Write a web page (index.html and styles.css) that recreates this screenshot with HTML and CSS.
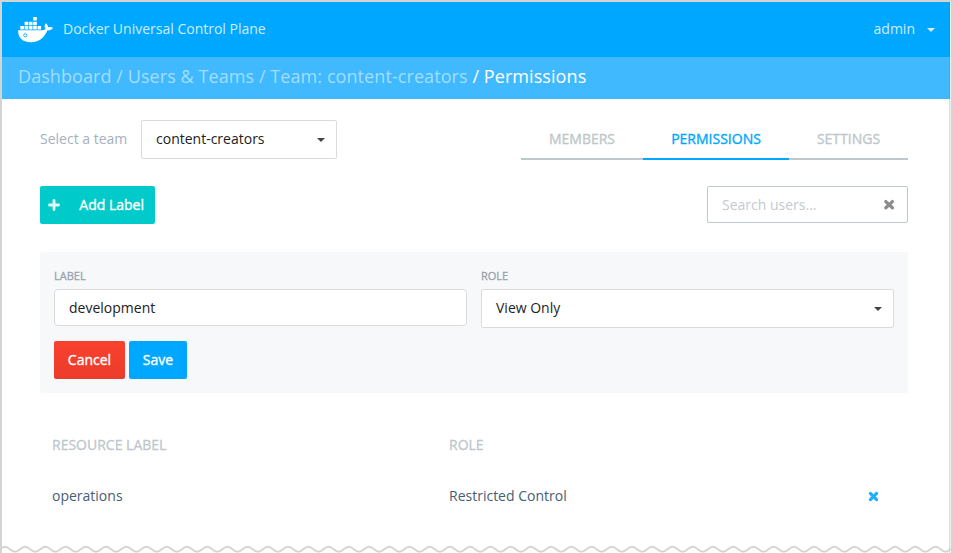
FILE: index.html
```html
<!DOCTYPE html>
<html lang="en">
<head>
<meta charset="utf-8">
<title>Docker Universal Control Plane</title>
<link rel="stylesheet" href="styles.css">
</head>
<body>
<div class="frame">
  <header class="topbar">
    <svg class="logo" width="36" height="26" viewBox="0 0 36 26">
      <g fill="#fff">
        <path d="M15.2 0h3.6v3.6h-3.6zM6.6 4.7h3.6v3.6h-3.6zM10.9 4.7h3.6v3.6h-3.6zM15.2 4.7h3.6v3.6h-3.6zM2.3 9h3.6v3.4h-3.6zM6.6 9h3.6v3.4h-3.6zM10.9 9h3.6v3.4h-3.6zM15.2 9h3.6v3.4h-3.6zM19.5 9h3.6v3.4h-3.6z"/>
        <path d="M.2 13.2H24.600q2-.2 3-1.200C26 10 26.500 7.700 27.900 6.300C29.500 7.600 30 9 30 10.200C31.800 9.900 33.900 10 35 10.800C34 12.800 32 13.600 29.300 13.500C26 21 21 25.200 12.500 25.200C4 25.200-.3 20 .2 13.200z"/>
      </g>
      <circle cx="7.300" cy="18.300" r="1.600" fill="#fff" stroke="#19afff" stroke-width="1"/>
    </svg>
    <span class="product">Docker Universal Control Plane</span>
    <span class="user">admin</span>
    <i class="caret caret-light"></i>
  </header>
  <nav class="crumbs"><span class="trail">Dashboard / Users &amp; Teams / Team: content-creators</span><span class="here">&nbsp;/ Permissions</span></nav>
  <main>
    <div class="row">
      <span class="team-label">Select a team</span>
      <div class="select team-select"><span>content-creators</span><i class="caret"></i></div>
      <div class="tabs">
        <div class="tab tab-members"><span>MEMBERS</span></div>
        <div class="tab tab-permissions"><span>PERMISSIONS</span></div>
        <div class="tab tab-settings"><span>SETTINGS</span></div>
      </div>
    </div>
    <div class="row tools">
      <div class="button add"><svg width="12" height="12" viewBox="0 0 12 12"><path d="M6 1.500v9M1.500 6h9" stroke="#e6fafa" stroke-width="2.800" stroke-linecap="round"/></svg><span>Add Label</span></div>
      <div class="search"><span>Search users...</span><svg width="12" height="12" viewBox="0 0 12 12"><path d="M2.800 2.600l6.600 6.200M9.400 2.600l-6.600 6.200" stroke="#8c8c8c" stroke-width="3.300" stroke-linecap="round"/></svg></div>
    </div>
    <section class="panel">
      <div class="fields">
        <div class="field"><div class="caption">LABEL</div><div class="input"><span>development</span></div></div>
        <div class="field"><div class="caption">ROLE</div><div class="select"><span class="view">View Only</span><i class="caret"></i></div></div>
      </div>
      <div class="actions">
        <div class="button cancel"><span>Cancel</span></div>
        <div class="button save"><span>Save</span></div>
      </div>
    </section>
    <div class="table">
      <div class="head"><span class="h-label">RESOURCE LABEL</span></div><div class="head"><span class="h-role">ROLE</span></div><div></div>
      <div><span class="c-label">operations</span></div><div><span class="c-role">Restricted Control</span></div>
      <div class="remove"><svg width="12" height="12" viewBox="0 0 12 12"><path d="M2.400 3.400l6.200 6.200M8.600 3.400l-6.200 6.200" stroke="#22afff" stroke-width="3.200" stroke-linecap="round"/></svg></div>
    </div>
  </main>
  <svg class="wave" width="949" height="8">
    <defs><pattern id="ripple" x="-7.200" y="0" width="20.230" height="8" patternUnits="userSpaceOnUse"><path d="M-10.115 1.700C-5.500 1.700-4.600 6.700 0 6.700S5.500 1.700 10.115 1.700S15.600 6.700 20.230 6.700S25.700 1.700 30.345 1.700" fill="none" stroke="#d4d4d4" stroke-width="1.900"/></pattern></defs>
    <rect width="949" height="8" fill="url(#ripple)"/>
  </svg>
</div>
</body>
</html>
```
FILE: styles.css
```css
* { box-sizing: border-box; }
body { margin: 0; background: #fff; font: 14px/20px "Open Sans", "Noto Sans", sans-serif; color: #222; }
.frame { width: 953px; height: 553px; overflow: hidden; display: flex; flex-direction: column; border: 2px solid #d4d4d4; border-bottom: 0; box-shadow: inset -1px 0 #f0f0f0, inset -2px 0 #dcdcdc; }
span { white-space: nowrap; }
.topbar { height: 55px; flex: none; margin-right: 1px; background: #00a7ff; border-right: 1px solid #0c9de9; display: flex; align-items: center; padding: 0 14px 0 16px; color: #ccedff; }
.logo { flex: none; }
.product { margin-left: 9px; padding-bottom: 2px; }
.user { margin-left: auto; padding-bottom: 2px; }
.caret { flex: none; width: 0; height: 0; border: 4px solid transparent; border-top-color: #444; border-bottom: 0; }
.caret-light { border-top-color: #ccedff; margin-left: 12px; }
.crumbs { height: 42px; flex: none; margin-right: 1px; padding: 0 16px; background: #40b9ff; border-right: 1px solid #2dadf2; font-size: 18px; line-height: 38px; letter-spacing: .075px; color: #fff; white-space: nowrap; }
.trail { color: #a3deff; }
main { flex: 1; padding: 21px 43px 0 38px; }
.row { display: flex; height: 40px; }
.team-label { width: 101px; line-height: 38px; color: #a5b1bc; }
.select { height: 39px; padding: 0 11px 0 14px; border: 1px solid #dadcdc; border-radius: 2px; background: #fff; display: flex; align-items: center; justify-content: space-between; }
.select span { padding-bottom: 2px; }
.team-select { width: 196px; }
.tabs { display: flex; margin-left: auto; }
.tab { height: 40px; border-bottom: 2px solid #bcc8cc; line-height: 38px; text-align: center; color: #bdc7cb; -webkit-text-stroke: .35px; }
.tab-members { width: 122px; }
.tab-permissions { width: 146px; border-color: #00a7ff; color: #00a7ff; }
.tab-settings { width: 119px; }
.tools { margin-top: 26px; height: 38px; justify-content: space-between; }
.button { height: 38px; border-radius: 2px; color: #fff; display: flex; align-items: center; justify-content: center; -webkit-text-stroke: .35px; }
.add { width: 115px; background: #00cbca; justify-content: space-between; padding: 0 11px 0 8px; }
.search { width: 201px; height: 37px; border: 1px solid #bcc8ce; border-radius: 2px; padding: 0 12px 0 14px; display: flex; align-items: center; justify-content: space-between; color: #c3cbd0; }
.panel { margin-top: 28px; height: 141px; border-radius: 2px; background: #f6f8fa; padding: 16px 14px 0; }
.fields { display: flex; gap: 14px; height: 73px; }
.field { flex: 1; }
.caption { height: 21px; line-height: 16px; font-size: 11px; color: #98a3ad; -webkit-text-stroke: .3px; }
.input { height: 37px; border: 1px solid #dadcdc; border-radius: 4px; background: #fff; padding: 0 14px; line-height: 36px; }
.actions { display: flex; gap: 4px; }
.cancel { width: 71px; background: linear-gradient(#f9412f, #eb3c2b); }
.save { width: 58px; background: #00a7ff; }
.table { margin: 42px 12px 0; display: grid; grid-template-columns: 397px 419px 1fr; grid-template-rows: 51px 20px; color: #456075; }
.head { color: #bdc7cb; -webkit-text-stroke: .3px; }
.remove { display: flex; align-items: center; }
.wave { flex: none; display: block; }
```
